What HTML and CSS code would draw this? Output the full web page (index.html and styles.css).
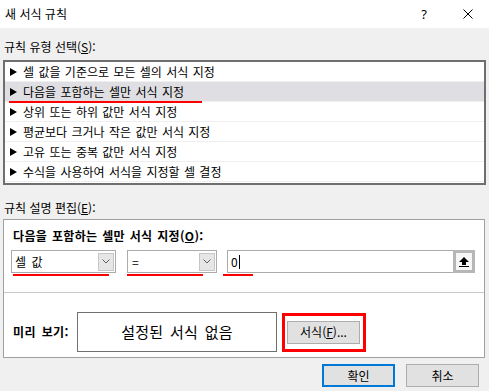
FILE: index.html
```html
<!DOCTYPE html>
<html lang="ko">
<head>
    <meta charset="UTF-8">
    <meta name="viewport" content="width=device-width, initial-scale=1.0">
    <title>새 서식 규칙</title>
    <link rel="stylesheet" href="styles.css">
</head>
<body>
    <div class="titlebar">
        <span class="title">새 서식 규칙</span>
        <span class="help">?</span>
        <span class="close">
            <svg width="10" height="10" viewBox="0 0 10 10"><path d="M0.5 0.5 L9.5 9.5 M9.5 0.5 L0.5 9.5" stroke="#000" stroke-width="1" fill="none"/></svg>
        </span>
    </div>

    <div class="content">
        <div class="group-label first">규칙 유형 선택(<u>S</u>):</div>
        <ul class="rule-list">
            <li><span class="arrow"></span>셀 값을 기준으로 모든 셀의 서식 지정</li>
            <li class="selected"><span class="arrow"></span>다음을 포함하는 셀만 서식 지정<span class="mark list-mark"></span></li>
            <li><span class="arrow"></span>상위 또는 하위 값만 서식 지정</li>
            <li><span class="arrow"></span>평균보다 크거나 작은 값만 서식 지정</li>
            <li><span class="arrow"></span>고유 또는 중복 값만 서식 지정</li>
            <li><span class="arrow"></span>수식을 사용하여 서식을 지정할 셀 결정</li>
        </ul>

        <div class="group-label second">규칙 설명 편집(<u>E</u>):</div>
        <div class="edit-box">
            <div class="edit-top">
                <div class="edit-title">다음을 포함하는 셀만 서식 지정(<u>O</u>):</div>
                <div class="controls">
                    <div class="combo combo-kind">
                        <span>셀 값</span>
                        <span class="drop"><svg width="8" height="5" viewBox="0 0 8 5"><path d="M0.5 0.5 L4 4 L7.5 0.5" stroke="#606060" fill="none"/></svg></span>
                    </div>
                    <div class="combo combo-op">
                        <span>=</span>
                        <span class="drop"><svg width="8" height="5" viewBox="0 0 8 5"><path d="M0.5 0.5 L4 4 L7.5 0.5" stroke="#606060" fill="none"/></svg></span>
                    </div>
                    <div class="ref-input">
                        <span class="value">0<span class="caret"></span></span>
                        <span class="collapse">
                            <svg width="12" height="12" viewBox="0 0 12 12"><path d="M6 1 L11 6 L8 6 L8 9 L4 9 L4 6 L1 6 Z" fill="#000"/><rect x="1" y="10" width="10" height="1" fill="#000"/></svg>
                        </span>
                    </div>
                </div>
                <span class="mark mark-kind"></span>
                <span class="mark mark-op"></span>
                <span class="mark mark-value"></span>
            </div>
            <div class="preview-row">
                <span class="preview-label">미리 보기:</span>
                <div class="preview-box">설정된 서식 없음</div>
                <div class="highlight">
                    <button class="btn">서식(<u>F</u>)...</button>
                </div>
            </div>
        </div>

        <div class="footer">
            <button class="btn btn-default">확인</button>
            <button class="btn">취소</button>
        </div>
    </div>
</body>
</html>
```

FILE: styles.css
```css
body {
    margin: 0;
    padding: 0;
    width: 489px;
    height: 391px;
    overflow: hidden;
    background-color: #f0f0f0;
    color: #000;
    font-family: 'Noto Sans CJK KR', 'Noto Sans', sans-serif;
    font-size: 12px;
    line-height: 16px;
}

u {
    text-decoration: underline;
    text-underline-offset: 1px;
}

/* 제목 표시줄 */
.titlebar {
    height: 28px;
    background-color: #fff;
    display: flex;
    align-items: center;
    padding-left: 5px;
}

.title {
    flex: 1;
}

.help {
    width: 8px;
    text-align: center;
    margin-right: 35px;
    font-family: 'Noto Sans', sans-serif;
    font-size: 13px;
}

.close {
    display: flex;
    margin-right: 16px;
}

.content {
    padding: 0 3px;
}

.group-label {
    padding-left: 1px;
}

.group-label.first {
    margin-top: 11px;
    margin-bottom: 5px;
}

.group-label.second {
    margin-top: 15px;
    margin-bottom: 3px;
}

/* 규칙 유형 목록 */
.rule-list {
    list-style: none;
    margin: 0;
    padding: 0 0 1px;
    width: 483px;
    box-sizing: border-box;
    background-color: #fff;
    border: 2px solid #6f6f6f;
}

.rule-list li {
    position: relative;
    height: 19px;
    display: flex;
    align-items: center;
    border-bottom: 1px solid #efefef;
    word-spacing: 1px;
}

.rule-list li.selected {
    background-color: #dfdfe3;
}

.arrow {
    width: 0;
    height: 0;
    border-left: 7px solid #000;
    border-top: 4px solid transparent;
    border-bottom: 4px solid transparent;
    margin: 0 6px 0 5px;
}

.mark {
    position: absolute;
    height: 2px;
    background-color: #ff0000;
}

.list-mark {
    left: 4px;
    top: 19px;
    width: 193px;
    z-index: 1;
}

/* 규칙 설명 편집 */
.edit-box {
    width: 482px;
    box-sizing: border-box;
    background-color: #fff;
    border: 1px solid #a0a0a0;
}

.edit-top {
    position: relative;
    padding: 8px 0 19px 7px;
}

.edit-title {
    padding-left: 2px;
    font-weight: bold;
    word-spacing: 1px;
    letter-spacing: 0.35px;
}

.controls {
    display: flex;
    margin-top: 6px;
    height: 23px;
}

.combo {
    display: flex;
    align-items: center;
    box-sizing: border-box;
    height: 23px;
    border: 1px solid #ababab;
    padding: 0 1px 0 3px;
}

.combo span:first-child {
    flex: 1;
}

.combo-kind {
    width: 105px;
    word-spacing: 2px;
}

.combo-op {
    width: 90px;
    margin-left: 11px;
    padding-left: 4px;
}

.drop {
    width: 16px;
    height: 18px;
    box-sizing: border-box;
    border: 1px solid #c6c6c6;
    background-color: #e6e6e6;
    display: flex;
    align-items: center;
    justify-content: center;
}

.ref-input {
    display: flex;
    width: 248px;
    margin-left: 10px;
}

.value {
    flex: 1;
    display: flex;
    align-items: center;
    box-sizing: border-box;
    border: 1px solid #ababab;
    border-right: none;
    padding-left: 3px;
}

.caret {
    width: 1px;
    height: 14px;
    background-color: #000;
    margin-left: 1px;
}

.collapse {
    width: 22px;
    height: 23px;
    box-sizing: border-box;
    border: 3px solid #b6b6b6;
    background-color: #f6f6f6;
    display: flex;
    align-items: center;
    justify-content: center;
}

.mark-kind {
    left: 9px;
    top: 54px;
    width: 96px;
}

.mark-op {
    left: 123px;
    top: 54px;
    width: 76px;
}

.mark-value {
    left: 219px;
    top: 54px;
    width: 30px;
}

/* 미리 보기 */
.preview-row {
    display: flex;
    align-items: center;
    border-top: 1px solid #c8c8c8;
    padding: 19px 0 5px 9px;
}

.preview-label {
    width: 64px;
    font-weight: bold;
    word-spacing: 2px;
    letter-spacing: 0.4px;
}

.preview-box {
    width: 200px;
    height: 40px;
    box-sizing: border-box;
    border: 1px solid #707070;
    display: flex;
    align-items: center;
    justify-content: center;
    font-size: 15px;
    word-spacing: 2px;
    letter-spacing: 0.3px;
}

.highlight {
    margin-left: 5px;
    border: 3px solid #ff0000;
    padding: 5px 3px 5px 2px;
    display: flex;
}

.btn {
    width: 73px;
    height: 23px;
    padding: 0;
    box-sizing: border-box;
    background-color: #e1e1e1;
    border: 1px solid #adadad;
    color: #000;
    font-family: inherit;
    font-size: 12px;
    line-height: 16px;
}

.footer {
    display: flex;
    justify-content: flex-end;
    gap: 11px;
    margin-top: 6px;
    padding-right: 7px;
}

.btn-default {
    border: 2px solid #0078d7;
}
```
